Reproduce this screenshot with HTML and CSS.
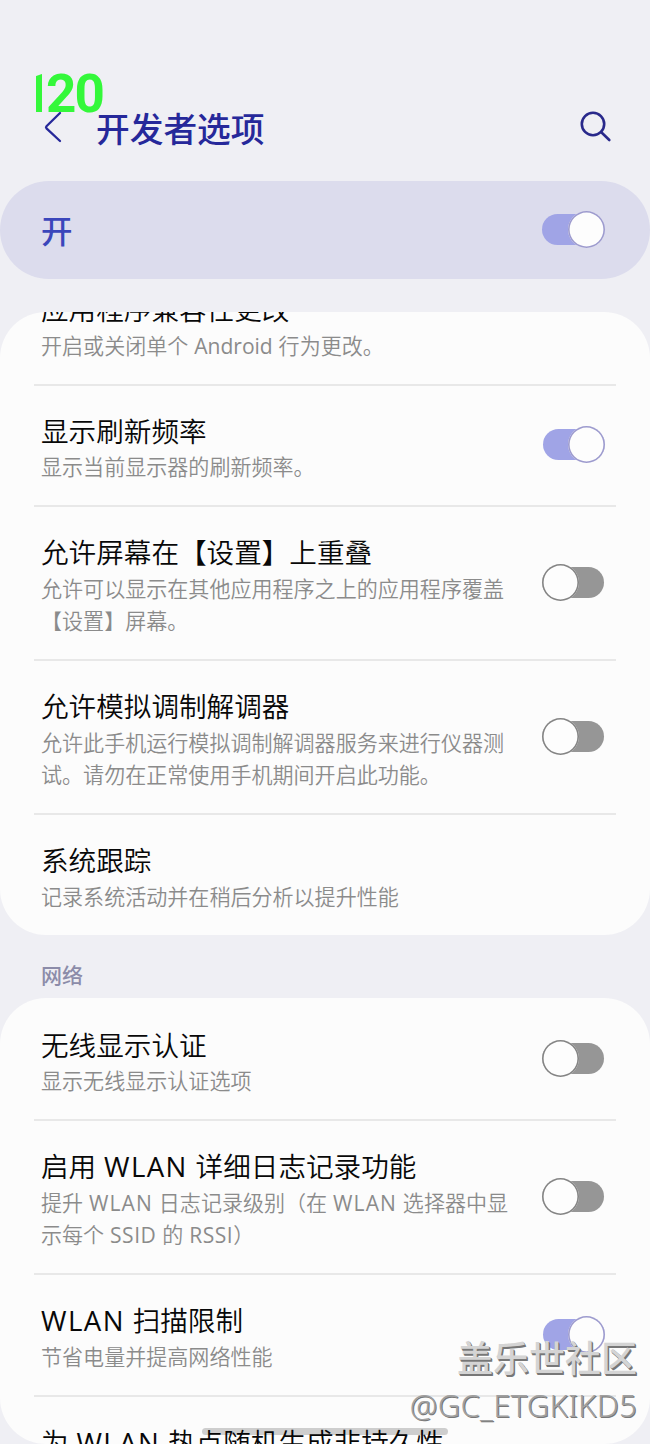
FILE: index.html
```html
<!DOCTYPE html>
<html lang="zh-CN">
<head>
<meta charset="utf-8">
<title>开发者选项</title>
<link rel="stylesheet" href="styles.css">
</head>
<body>
<div class="screen">
  <header class="appbar">
    <svg class="back" width="20" height="32" viewBox="0 0 20 32" fill="none"><path d="M17 2 3.500 15.200Q2.500 16.300 3.500 17.400L17 30" stroke="#26289a" stroke-width="2.300" stroke-linecap="round"/></svg>
    <h1 class="page-title">开发者选项</h1>
    <svg class="search" width="34" height="34" viewBox="0 0 34 34" fill="none" stroke="#29298b" stroke-width="2.600" stroke-linecap="round"><circle cx="14" cy="14" r="11.200"/><path d="m22.300 22.300 8 7.700"/></svg>
  </header>

  <section class="master"><span class="master-label">开</span><span class="switch on master-switch"></span></section>

  <main class="list">
    <section class="card card-first">
      <div class="row scrolled"><div class="copy"><div class="title">应用程序兼容性更改</div><div class="sub">开启或关闭单个 <span class="word">Android</span> 行为更改。</div></div></div>
      <div class="row"><div class="copy"><div class="title">显示刷新频率</div><div class="sub">显示当前显示器的刷新频率。</div></div><span class="switch on"></span></div>
      <div class="row tall"><div class="copy"><div class="title">允许屏幕在【设置】上重叠</div><div class="sub">允许可以显示在其他应用程序之上的应用程序覆盖<br>【设置】屏幕。</div></div><span class="switch"></span></div>
      <div class="row tall"><div class="copy"><div class="title">允许模拟调制解调器</div><div class="sub">允许此手机运行模拟调制解调器服务来进行仪器测<br>试。请勿在正常使用手机期间开启此功能。</div></div><span class="switch"></span></div>
      <div class="row"><div class="copy"><div class="title">系统跟踪</div><div class="sub">记录系统活动并在稍后分析以提升性能</div></div></div>
    </section>
    <h2 class="group">网络</h2>
    <section class="card card-network">
      <div class="row"><div class="copy"><div class="title">无线显示认证</div><div class="sub">显示无线显示认证选项</div></div><span class="switch"></span></div>
      <div class="row tall"><div class="copy"><div class="title">启用 <span class="latin">WLAN</span> 详细日志记录功能</div><div class="sub">提升 <span class="latin">WLAN</span> 日志记录级别（在 <span class="latin">WLAN</span> 选择器中显<br>示每个 <span class="caps">SSID</span> 的 <span class="caps">RSSI</span>）</div></div><span class="switch"></span></div>
      <div class="row"><div class="copy"><div class="title"><span class="latin">WLAN</span> 扫描限制</div><div class="sub">节省电量并提高网络性能</div></div><span class="switch on"></span></div>
      <div class="row"><div class="copy"><div class="title">为 <span class="latin">WLAN</span> 热点随机生成非持久性</div></div></div>
    </section>
  </main>

  <div class="fps"><span class="one">1</span><span>2</span><span>0</span></div>
  <div class="home-bar"></div>
  <div class="watermark"><div class="wm-name">盖乐世社区</div><div class="wm-user">@GC_ETGKIKD5</div></div>
</div>
</body>
</html>
```
FILE: styles.css
```css
* { box-sizing: border-box; }
body { margin: 0; background: #efeff4; font-family: "Open Sans", "Noto Sans CJK SC", sans-serif; }
.screen { position: relative; width: 650px; height: 1444px; overflow: hidden; display: flex; flex-direction: column; background: #efeff4; }

.appbar { height: 181px; flex: none; padding: 72px 38px 0 43px; display: flex; align-items: center; }
.back { flex: none; }
.page-title { margin: 4px 0 0 33px; font-size: 33.7px; line-height: 44px; font-weight: 500; color: #26289a; flex: 1; }
.search { flex: none; margin-right: -1px; }

.master { height: 98px; flex: none; border-radius: 49px; background: #dcdced; display: flex; align-items: center; padding: 0 45px 2px 41px; }
.master-label { flex: 1; font-size: 31.500px; line-height: 44px; font-weight: 500; color: #3b46bb; margin-top: 4px; }

.switch { position: relative; flex: none; width: 62px; height: 31px; border-radius: 16px; background: #969696; margin: 0 1px 2px 0; }
.switch::after { content: ""; position: absolute; left: 0; top: -3px; width: 37px; height: 37px; border-radius: 50%; background: #fdfdfd; box-shadow: inset 0 0 0 1.6px #848484; }
.switch.on { background: #a0a4e6; margin-right: 0; }
.switch.on::after { left: auto; right: 0; box-shadow: inset 0 0 0 1.6px #9d9bce; }
.switch.master-switch { width: 63px; margin-bottom: 0; }

.list { flex: 1; min-height: 0; margin-top: 33px; overflow: hidden; }
.card { background: #fcfcfc; border-radius: 46px; overflow: hidden; padding: 0 34px; }
.card-first { height: 623px; }
.card-network { height: 446px; padding-top: 1.500px; }
.row { height: 121.700px; border-bottom: 2px solid #e8e8e8; display: flex; align-items: center; padding: 0 11px 0 7px; }
.row.tall { height: 154px; }
.row.scrolled { margin-top: -48px; }
.row:last-child { border-bottom: 0; }
.copy { flex: 1; align-self: flex-start; padding-top: 25px; white-space: nowrap; }
.title { font-size: 27.6px; line-height: 40px; height: 40.600px; color: #080808; font-weight: 350; word-spacing: .6px; }
.sub { font-size: 21.050px; line-height: 32.400px; color: #8b8b8b; font-weight: 350; word-spacing: .4px; }
.latin { letter-spacing: .052em; font-weight: 400; }
.caps { letter-spacing: .025em; font-weight: 400; }
.word { font-weight: 400; }
.group { margin: 0; height: 63px; padding: 20px 0 0 41px; font-size: 21px; line-height: 40px; font-weight: 500; color: #8c8ca9; }

.fps { position: absolute; left: 36px; top: 67px; display: flex; font-family: Roboto, sans-serif; font-weight: 700; font-size: 53px; line-height: 54px; color: #34f83a; }
.fps span { width: 28.500px; }
.fps .one { width: 6px; margin-right: 4px; overflow: hidden; text-indent: -14px; }
.home-bar { position: absolute; left: 202px; top: 1428px; width: 246px; height: 7px; border-radius: 4px; background: rgba(0, 0, 0, .18); }
.watermark { position: absolute; right: 13px; top: 1336px; text-align: right; white-space: nowrap; color: #d4d4d4; text-shadow: 1px 1px 0 #777, 1.5px 1.5px 0 #777; }
.wm-name { font-size: 36px; line-height: 46px; font-weight: 500; }
.wm-user { font-family: "Noto Sans", sans-serif; font-size: 31px; line-height: 47px; font-weight: 300; letter-spacing: .3px; color: #a0a0a0; text-shadow: 1px 1px 0 #777; }
```
